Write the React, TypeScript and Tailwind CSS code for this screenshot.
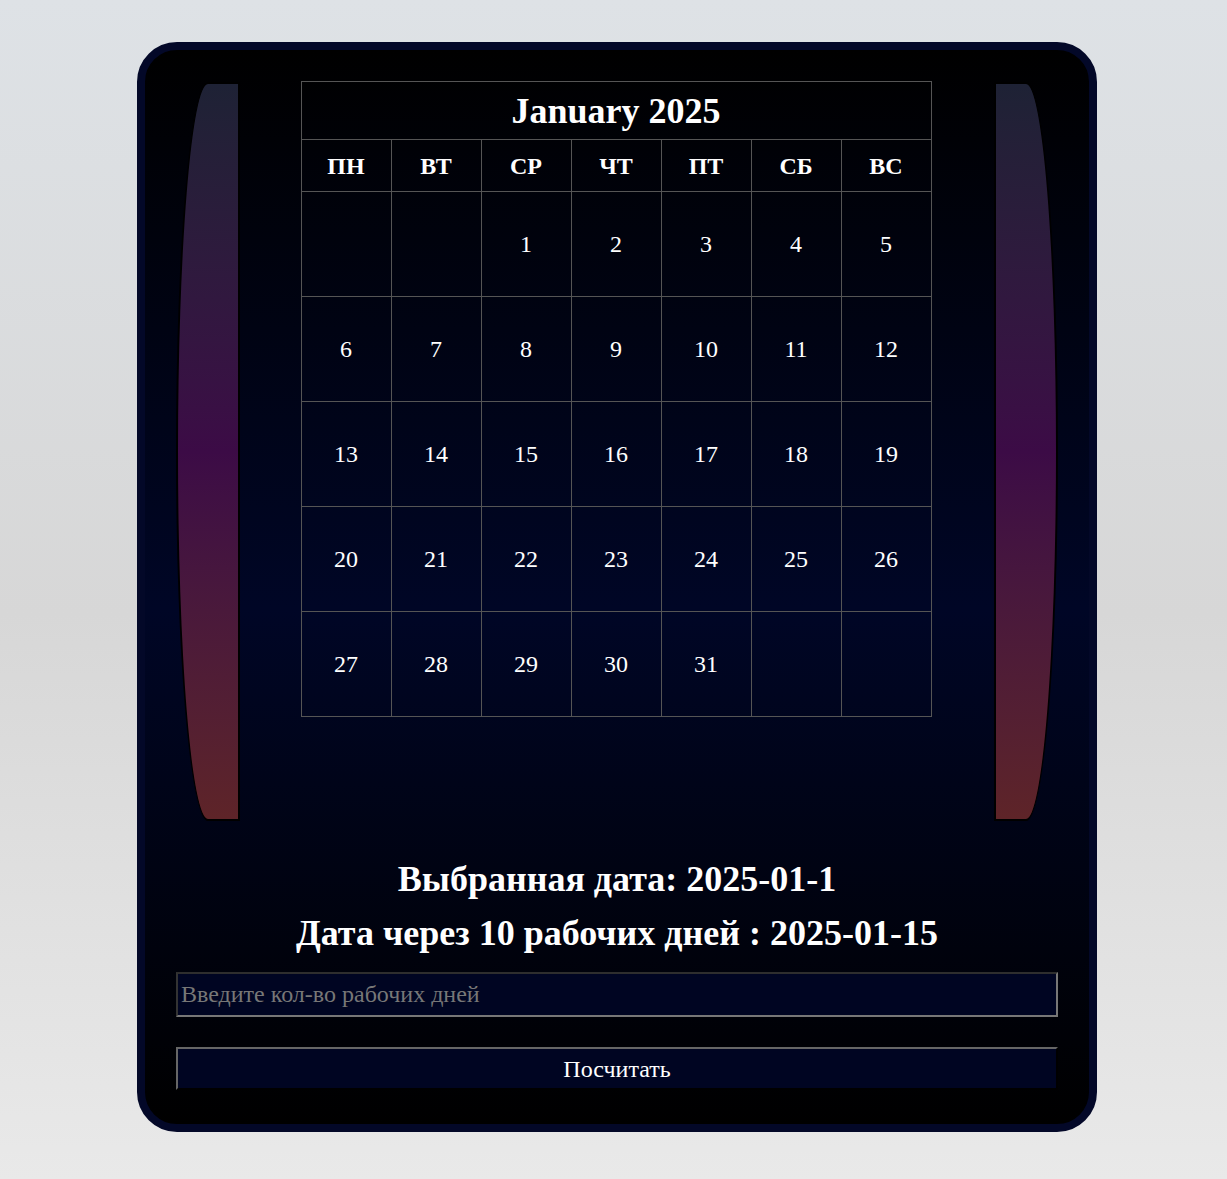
const days = ["ПН", "ВТ", "СР", "ЧТ", "ПТ", "СБ", "ВС"];

const weeks: (number | null)[][] = [
  [null, null, 1, 2, 3, 4, 5],
  [6, 7, 8, 9, 10, 11, 12],
  [13, 14, 15, 16, 17, 18, 19],
  [20, 21, 22, 23, 24, 25, 26],
  [27, 28, 29, 30, 31, null, null],
];

const Bar = ({ side }: { side: "left" | "right" }) => (
  <div
    className={
      side === "left"
        ? "mt-[1px] h-[739px] w-[64px] border-2 border-black rounded-tl-[50%] rounded-bl-[50%] bg-gradient-to-b from-[#1e2235] via-[#3c0b46] to-[#5e2428]"
        : "mt-[1px] h-[739px] w-[64px] border-2 border-black rounded-tr-[50%] rounded-br-[50%] bg-gradient-to-b from-[#1e2235] via-[#3c0b46] to-[#5e2428]"
    }
  />
);

const App = () => {
  return (
    <div
      className="min-h-screen w-full pt-[42px] pb-[48px] bg-[linear-gradient(to_bottom,#dee2e6_0%,#d7d7d7_52%,#e9e9e9_100%)]"
      style={{ fontFamily: '"Liberation Serif", "Times New Roman", serif' }}
    >
      <div className="ml-[137px] w-[960px] rounded-[40px] border-8 border-[#030828] bg-[linear-gradient(to_bottom,#000000_0%,#000626_52%,#000000_100%)] px-[31px] pt-[31px] pb-[34px] text-white">
        <div className="flex items-start justify-between">
          <Bar side="left" />
          <table className="mr-[2px] border-collapse">
            <thead>
              <tr>
                <th
                  colSpan={7}
                  className="h-[58px] border border-[#555] text-[36px] font-bold"
                >
                  January 2025
                </th>
              </tr>
              <tr>
                {days.map((d) => (
                  <th
                    key={d}
                    className="h-[52px] w-[90px] border border-[#555] text-[24px] font-bold"
                  >
                    {d}
                  </th>
                ))}
              </tr>
            </thead>
            <tbody>
              {weeks.map((w, i) => (
                <tr key={i}>
                  {w.map((n, j) => (
                    <td
                      key={j}
                      className="h-[105px] w-[90px] border border-[#555] text-center text-[24px]"
                    >
                      {n ?? ""}
                    </td>
                  ))}
                </tr>
              ))}
            </tbody>
          </table>
          <Bar side="right" />
        </div>

        <div className="mt-[31px] text-center text-[36px] font-bold leading-[54px]">
          <div>Выбранная дата: 2025-01-1</div>
          <div>Дата через 10 рабочих дней : 2025-01-15</div>
        </div>

        <input
          type="text"
          placeholder="Введите кол-во рабочих дней"
          className="mt-[12px] block h-[45px] w-full border-2 border-t-[#2e2e2e] border-l-[#333] border-b-[#777] border-r-[#777] bg-[#000522] px-[3px] text-[24px] text-white placeholder:text-[#777] outline-none"
        />

        <button className="mt-[30px] block h-[43px] w-full border-2 border-t-[#666] border-l-[#666] border-b-black border-r-black bg-[#000522] text-[24px] text-white">
          Посчитать
        </button>
      </div>
    </div>
  );
};

export default App;
